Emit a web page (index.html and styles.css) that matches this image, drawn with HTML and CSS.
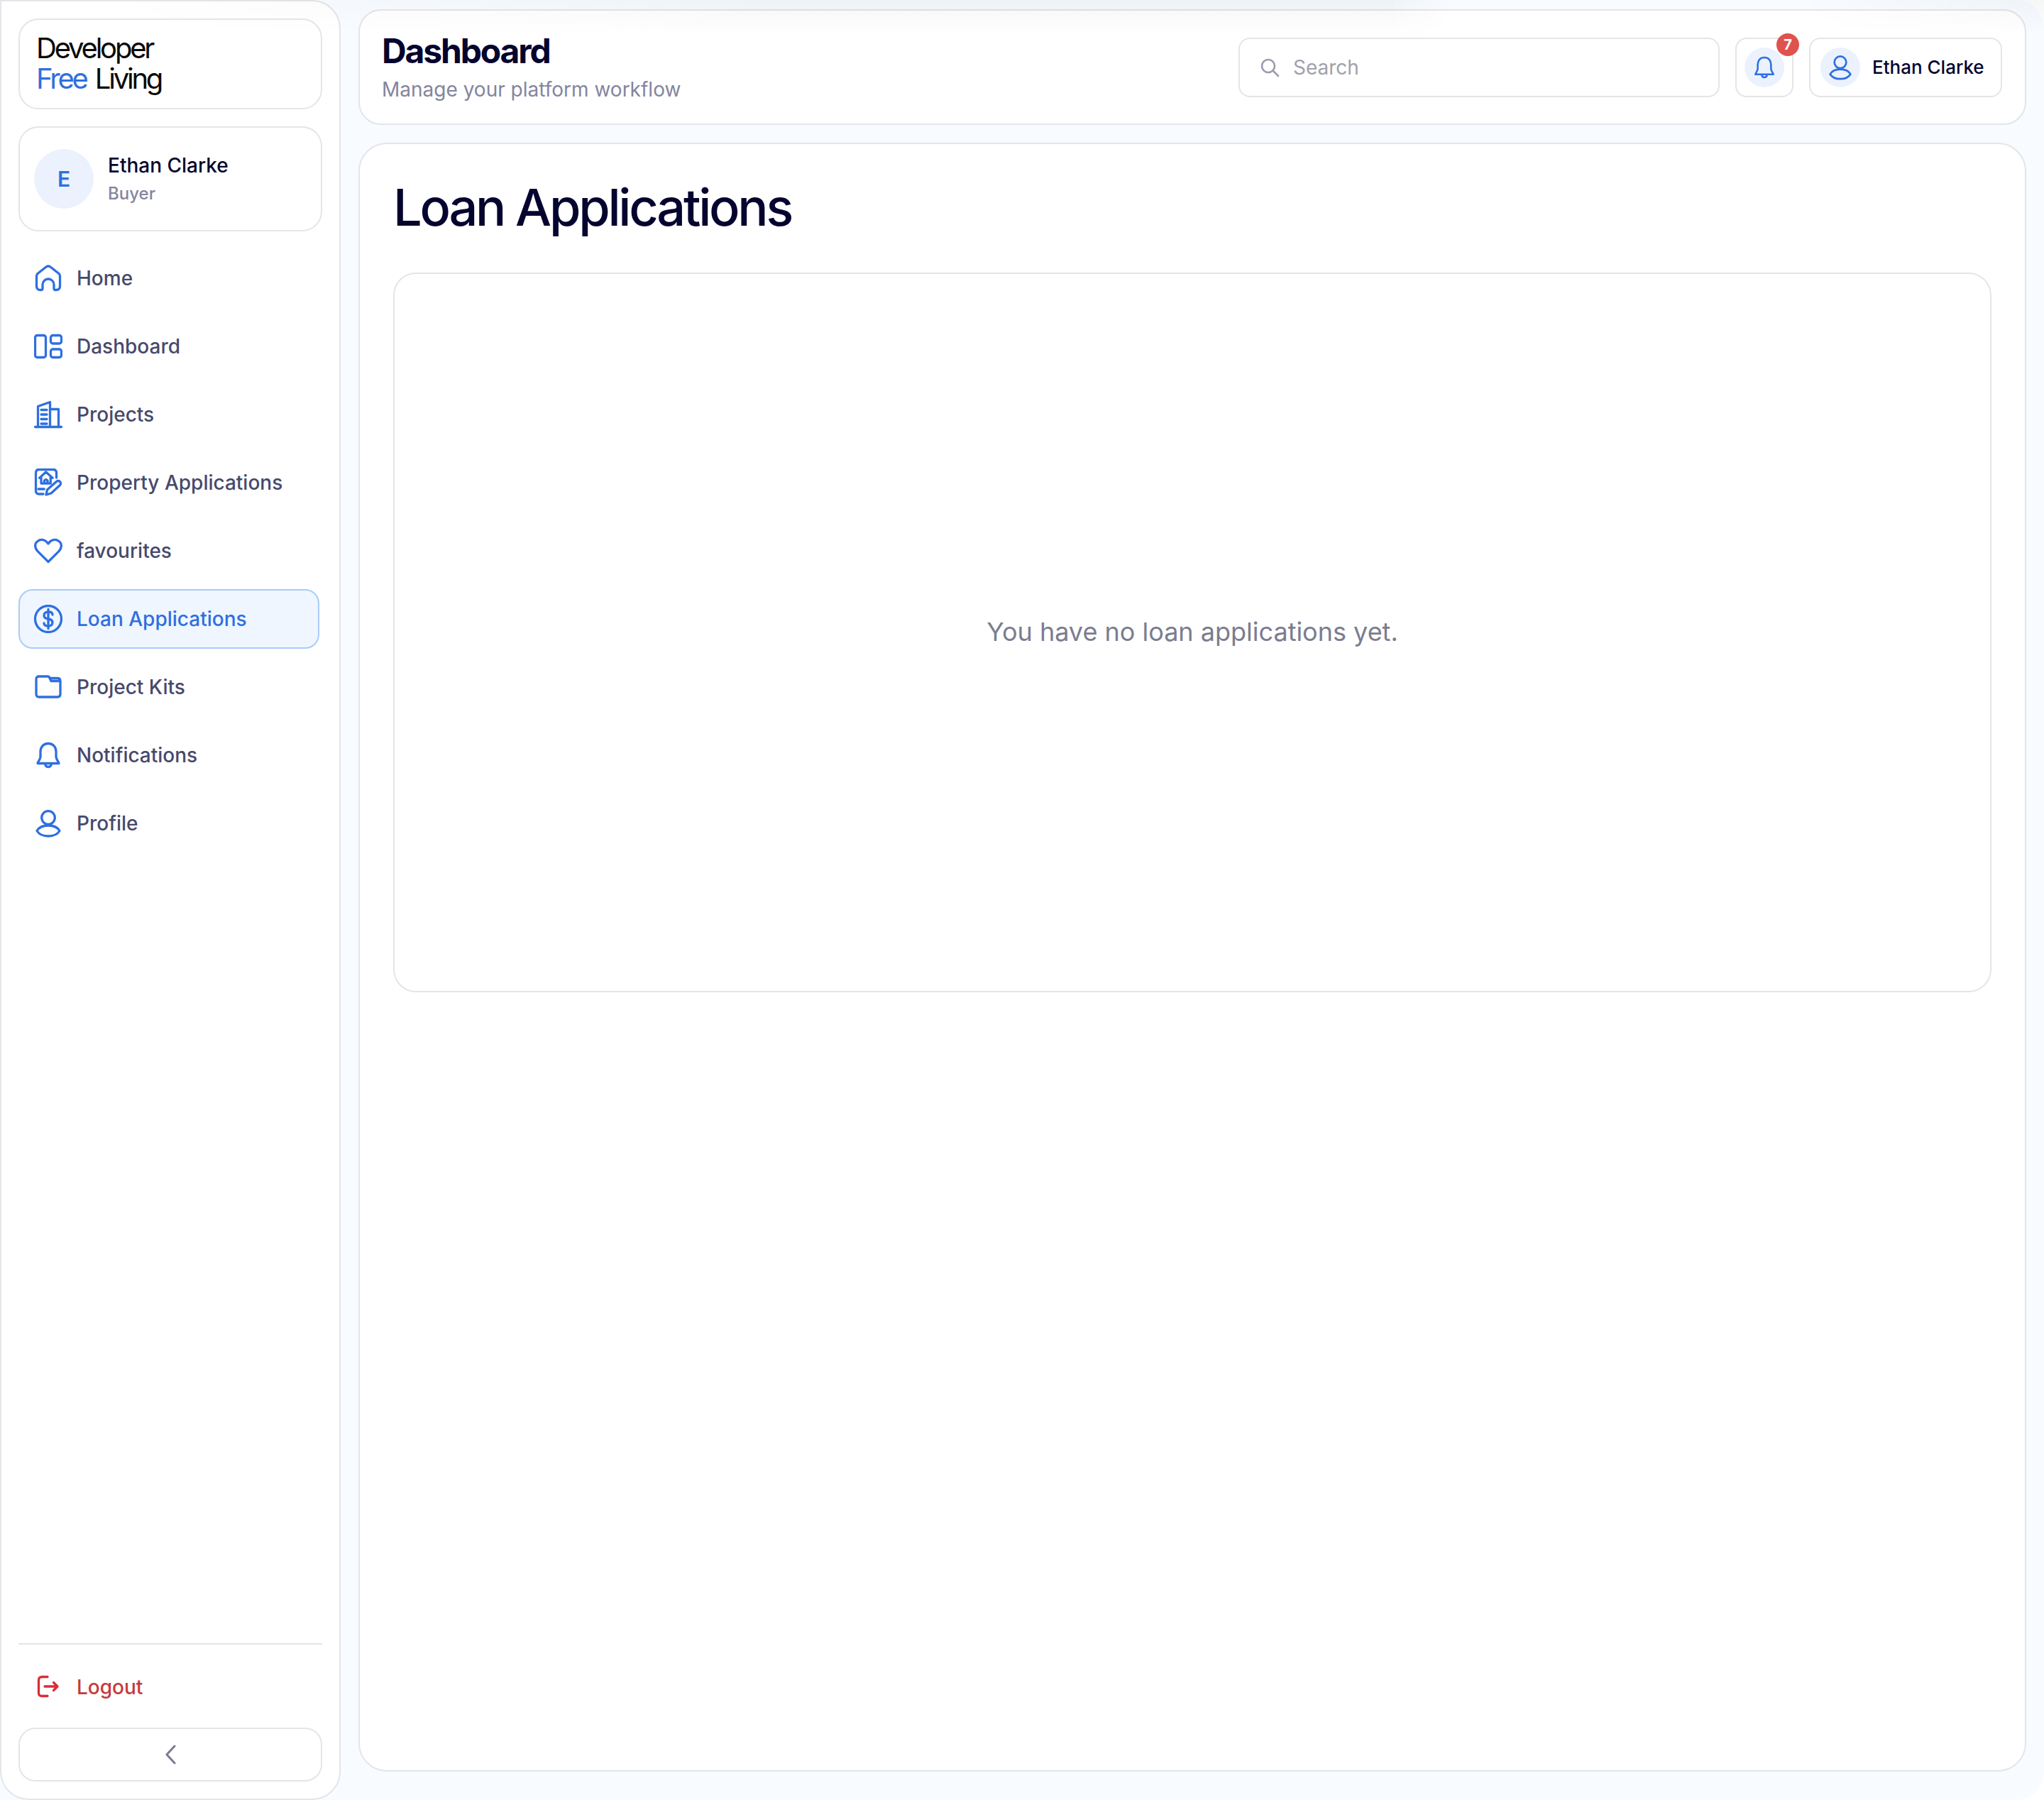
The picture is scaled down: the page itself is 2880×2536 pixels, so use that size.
FILE: index.html
```html
<!DOCTYPE html>
<html lang="en">
<head>
    <meta charset="UTF-8">
    <meta name="viewport" content="width=device-width, initial-scale=1">
    <title>Loan Applications</title>
    <link rel="stylesheet" href="styles.css">
</head>
<body>
    <div class="app">
        <aside class="sidebar">
            <div class="brand">Developer<br><span class="brand-free">Free</span> Living</div>
            <div class="user-card">
                <div class="avatar">E</div>
                <div>
                    <div class="user-name">Ethan Clarke</div>
                    <div class="user-role">Buyer</div>
                </div>
            </div>
            <nav class="nav">
                <a class="nav-item">
                    <svg class="nav-icon" viewBox="0 0 40 40"><path d="M3.5 17C3.5 15.5 4 14.5 5 13.5L17 4Q20 2 23 4L35 13.5C36 14.5 36.5 15.5 36.5 17V31Q36.5 36.5 31 36.5H30Q28 36.5 28 34.5V29A8 8 0 0 0 12 29V34.5Q12 36.5 10 36.5H9Q3.5 36.5 3.5 31Z"/></svg>
                    Home
                </a>
                <a class="nav-item">
                    <svg class="nav-icon" viewBox="0 0 40 40"><rect x="1.5" y="4.5" width="15" height="31" rx="3"/><rect x="23.5" y="4.5" width="15" height="11.5" rx="3"/><rect x="23.5" y="24" width="15" height="11.5" rx="3"/></svg>
                    Dashboard
                </a>
                <a class="nav-item">
                    <svg class="nav-icon" viewBox="0 0 40 40"><path d="M1.5 37.5H38.5M5.5 37.5V8.5L22.5 2.5V37.5M22.5 12.5H34.5V37.5M10 13.5H18M10 20H18M10 26.5H18M10 33H18"/></svg>
                    Projects
                </a>
                <a class="nav-item">
                    <svg class="nav-icon" viewBox="0 0 40 40"><path d="M31.5 13V6Q31.5 1.5 27 1.5H7Q2.5 1.5 2.5 6V31.5Q2.5 36 7 36H13M7.7 13.3L16.7 5L26 13.3M10 11V21H23.3V11M14.5 21V17Q16.7 14.5 19 17V21M6 29H14.3M17 37L18.5 30L31.5 18.5Q34 16.5 36.5 18.5Q38.5 21 36.5 23.5L24 35Z"/></svg>
                    Property Applications
                </a>
                <a class="nav-item">
                    <svg class="nav-icon" viewBox="0 0 40 40"><path d="M20 35.5L4.8 20.3C0.5 15.5 0.6 9.5 5 6.5C9.5 3 16 4 20 10C24 4 30.5 3 35 6.5C39.4 9.5 39.5 15.5 35.2 20.3Z"/></svg>
                    favourites
                </a>
                <a class="nav-item active">
                    <svg class="nav-icon" viewBox="0 0 40 40"><circle cx="20" cy="20" r="18.5"/><path d="M26 14C26 11.5 23.5 10 20 10C16.5 10 14 12 14 15C14 18 16.5 19.5 20 20C23.5 20.5 26 22 26 25C26 28 23.5 30 20 30C16.5 30 14 28.5 14 26M20 6.5V33.5"/></svg>
                    Loan Applications
                </a>
                <a class="nav-item">
                    <svg class="nav-icon" viewBox="0 0 40 40"><path d="M7 5H19Q21 5 22 6.5L22.7 7.5H33Q37 7.5 37 11.5V30Q37 34 33 34H7Q3 34 3 30V9Q3 5 7 5ZM21 5.5L24 11.5H37"/></svg>
                    Project Kits
                </a>
                <a class="nav-item">
                    <svg class="nav-icon" viewBox="0 0 40 40"><path d="M20 3.5C13 3.5 9 8.5 9 15V22C9 26 6 28 5 31.5H35C34 28 31 26 31 22V15C31 8.5 27 3.5 20 3.5ZM15.5 32C16 35 18 36.5 20 36.5C22 36.5 24 35 24.5 32"/></svg>
                    Notifications
                </a>
                <a class="nav-item">
                    <svg class="nav-icon" viewBox="0 0 40 40"><circle cx="20" cy="12" r="9.3"/><path d="M4 30.5C7 25.5 13 23 20 23C27 23 33 25.5 36 30.5C33 35.5 27 38 20 38C13 38 7 35.5 4 30.5Z"/></svg>
                    Profile
                </a>
            </nav>
            <div class="sidebar-foot">
                <a class="logout">
                    <svg class="nav-icon" viewBox="0 0 40 40"><path d="M19 5.5H11Q6.5 5.5 6.5 10V28Q6.5 32.5 11 32.5H19M15 19H33M27.5 13.5L33 19L27.5 24.5"/></svg>
                    Logout
                </a>
                <button class="collapse">
                    <svg viewBox="0 0 16 28"><path d="M14 2L3 14L14 26"/></svg>
                </button>
            </div>
        </aside>
        <div class="content">
            <header class="topbar">
                <div class="topbar-text">
                    <h2 class="topbar-title">Dashboard</h2>
                    <div class="topbar-sub">Manage your platform workflow</div>
                </div>
                <div class="topbar-right">
                    <div class="search">
                        <svg class="search-icon" viewBox="0 0 28 28"><circle cx="12" cy="12" r="9"/><path d="M19 19L26 26"/></svg>
                        <span>Search</span>
                    </div>
                    <div class="bell-btn">
                        <span class="icon-circle">
                            <svg class="bell-icon" viewBox="0 0 40 40"><path d="M20 3.5C13 3.5 9 8.5 9 15V22C9 26 6 28 5 31.5H35C34 28 31 26 31 22V15C31 8.5 27 3.5 20 3.5ZM15.5 32C16 35 18 36.5 20 36.5C22 36.5 24 35 24.5 32"/></svg>
                        </span>
                        <span class="badge">7</span>
                    </div>
                    <div class="user-btn">
                        <span class="icon-circle">
                            <svg class="user-icon" viewBox="0 0 40 40"><circle cx="20" cy="12" r="9.3"/><path d="M4 30.5C7 25.5 13 23 20 23C27 23 33 25.5 36 30.5C33 35.5 27 38 20 38C13 38 7 35.5 4 30.5Z"/></svg>
                        </span>
                        Ethan Clarke
                    </div>
                </div>
            </header>
            <main class="panel">
                <h1 class="panel-title">Loan Applications</h1>
                <div class="empty">You have no loan applications yet.</div>
            </main>
        </div>
        <div class="top-shade"></div>
    </div>
</body>
</html>
```

FILE: styles.css
```css
:root {
    --bg: #f8fbff;
    --line: #e4e5e8;
    --blue: #2f6fe0;
    --ink: #04042f;
    --nav: #47496b;
    --muted: #84859d;
}
* {
    box-sizing: border-box;
}
html, body {
    margin: 0;
    background: #fff;
}
body {
    font-family: Inter, "Liberation Sans", sans-serif;
    color: var(--ink);
}
.app {
    position: relative;
    display: flex;
    height: 2536px;
    background: var(--bg);
    border-radius: 0 40px 40px 0;
}
/* faint grey wash along the top edge, runs over the cards */
.top-shade {
    position: absolute;
    top: 0;
    left: 0;
    right: 0;
    height: 48px;
    background: linear-gradient(to bottom, rgba(20, 20, 40, 0.04), rgba(20, 20, 40, 0));
    -webkit-mask-image: linear-gradient(to right, transparent 5%, #000 38%, #000 68%, transparent 71%, transparent 88%, #000 100%);
    mask-image: linear-gradient(to right, transparent 5%, #000 38%, #000 68%, transparent 71%, transparent 88%, #000 100%);
    pointer-events: none;
}
.sidebar {
    width: 480px;
    flex-shrink: 0;
    height: 2536px;
    background: #fff;
    border: 2px solid var(--line);
    border-radius: 0 40px 40px 40px;
    padding: 24px;
    display: flex;
    flex-direction: column;
}
.brand {
    height: 128px;
    border: 2px solid var(--line);
    border-radius: 28px;
    padding: 18px 23px;
    font-size: 40px;
    line-height: 43px;
    letter-spacing: -0.08em;
    word-spacing: 4px;
    color: #0a0a0a;
}
.brand-free {
    color: var(--blue);
}
.user-card {
    height: 148px;
    margin-top: 24px;
    border: 2px solid var(--line);
    border-radius: 28px;
    padding: 0 20px;
    display: flex;
    align-items: center;
    gap: 20px;
}
.avatar {
    width: 84px;
    height: 84px;
    border-radius: 50%;
    background: #ebf2fe;
    color: var(--blue);
    font-size: 30px;
    font-weight: 600;
    display: flex;
    align-items: center;
    justify-content: center;
}
.user-name {
    font-size: 28px;
    font-weight: 500;
    line-height: 38px;
}
.user-role {
    margin-top: 3px;
    font-size: 24px;
    font-weight: 500;
    line-height: 36px;
    color: var(--muted);
}
.nav {
    margin-top: 24px;
    display: flex;
    flex-direction: column;
    gap: 12px;
    width: 424px;
}
.nav-item, .logout {
    height: 84px;
    display: flex;
    align-items: center;
    gap: 20px;
    padding: 0 20px;
    border: 2px solid transparent;
    border-radius: 20px;
    font-size: 28px;
    font-weight: 500;
    color: var(--nav);
}
.nav-icon {
    width: 40px;
    height: 40px;
    fill: none;
    stroke: var(--blue);
    stroke-width: 3.3;
    stroke-linecap: round;
    stroke-linejoin: round;
    flex-shrink: 0;
}
.nav-item.active {
    background: #eff6ff;
    border-color: #a8cdf8;
    color: var(--blue);
}
.sidebar-foot {
    margin-top: auto;
    border-top: 2px solid var(--line);
    padding-top: 18px;
}
.logout {
    color: #c53a3a;
}
.logout .nav-icon {
    stroke: #d92d37;
}
.collapse {
    display: flex;
    align-items: center;
    justify-content: center;
    width: 100%;
    height: 76px;
    margin-top: 15px;
    background: #fff;
    border: 2px solid var(--line);
    border-radius: 24px;
    padding: 0;
}
.collapse svg {
    width: 16px;
    height: 28px;
    fill: none;
    stroke: #7a7b94;
    stroke-width: 3;
    stroke-linecap: round;
    stroke-linejoin: round;
}
.content {
    flex: 1;
    padding: 13px 25px 0;
    display: flex;
    flex-direction: column;
    gap: 25px;
    min-width: 0;
}
.topbar {
    height: 163px;
    background: #fff;
    border: 2px solid var(--line);
    border-radius: 32px;
    padding: 0 32px 0 31px;
    display: flex;
    align-items: center;
    justify-content: space-between;
}
.topbar-text {
    display: flex;
    flex-direction: column;
    gap: 5px;
}
.topbar-title {
    margin: 0;
    font-size: 48px;
    font-weight: 700;
    line-height: 58px;
    letter-spacing: -0.045em;
}
.topbar-sub {
    font-size: 28px;
    line-height: 40px;
    color: var(--muted);
}
.topbar-right {
    display: flex;
    align-items: center;
    gap: 22px;
}
.search {
    width: 678px;
    height: 84px;
    border: 2px solid var(--line);
    border-radius: 16px;
    padding: 0 28px;
    display: flex;
    align-items: center;
    gap: 19px;
    font-size: 28px;
    color: #a1a1aa;
}
.search-icon {
    width: 28px;
    height: 28px;
    fill: none;
    stroke: #9a9bb0;
    stroke-width: 2.6;
    stroke-linecap: round;
}
.bell-btn {
    position: relative;
    width: 82px;
    height: 84px;
    border: 2px solid var(--line);
    border-radius: 16px;
    display: flex;
    align-items: center;
    justify-content: center;
}
.icon-circle {
    width: 56px;
    height: 56px;
    border-radius: 50%;
    background: #ebf2fe;
    display: flex;
    align-items: center;
    justify-content: center;
    flex-shrink: 0;
}
.icon-circle svg {
    fill: none;
    stroke: var(--blue);
    stroke-width: 3;
    stroke-linecap: round;
    stroke-linejoin: round;
}
.bell-icon {
    width: 34px;
    height: 34px;
}
.user-icon {
    width: 36px;
    height: 36px;
}
.badge {
    position: absolute;
    top: -8px;
    right: -10px;
    width: 32px;
    height: 32px;
    border-radius: 50%;
    background: #e0524e;
    color: #fff;
    font-size: 20px;
    font-weight: 700;
    display: flex;
    align-items: center;
    justify-content: center;
}
.user-btn {
    width: 272px;
    height: 84px;
    border: 2px solid var(--line);
    border-radius: 16px;
    padding: 0 14px;
    display: flex;
    align-items: center;
    gap: 17px;
    font-size: 26px;
    font-weight: 500;
}
.panel {
    flex: 0 0 2295px;
    background: #fff;
    border: 2px solid var(--line);
    border-radius: 40px;
    padding: 0 47px;
}
.panel-title {
    margin: 0;
    height: 181px;
    font-size: 72px;
    font-weight: 500;
    line-height: 178px;
    letter-spacing: -0.045em;
}
.empty {
    height: 1014px;
    border: 2px solid var(--line);
    border-radius: 32px;
    padding-bottom: 3px;
    display: flex;
    align-items: center;
    justify-content: center;
    font-size: 36px;
    color: #7b7c90;
}
```
